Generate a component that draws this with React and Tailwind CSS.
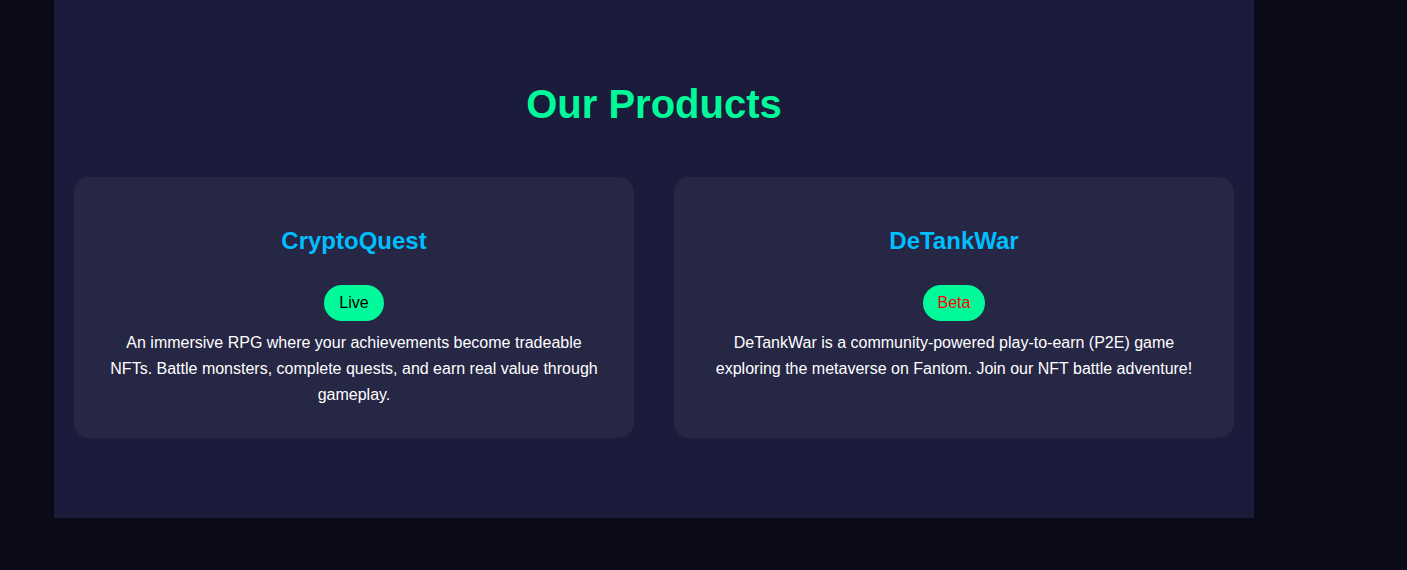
const products = [
  {
    name: 'CryptoQuest',
    status: 'Live',
    statusColor: 'text-black',
    description:
      'An immersive RPG where your achievements become tradeable NFTs. Battle monsters, complete quests, and earn real value through gameplay.',
  },
  {
    name: 'DeTankWar',
    status: 'Beta',
    statusColor: 'text-[#ff0000]',
    description:
      'DeTankWar is a community-powered play-to-earn (P2E) game exploring the metaverse on Fantom. Join our NFT battle adventure!',
  },
];

const App = () => {
  return (
    <div className="min-h-[570px] bg-[#0a0a19] font-['Liberation_Sans',Arial,sans-serif]">
      <section className="ml-[54px] w-[1200px] bg-[#1b1b3b] px-5 pt-20 pb-20">
        <h2 className="text-center text-[40px] leading-[1.2] font-bold text-[#00fa9a] mb-[49px]">Our Products</h2>

        {/* Product cards */}
        <div className="grid grid-cols-2 gap-10">
          {products.map((p) => (
            <div key={p.name} className="bg-[#262645] rounded-[15px] px-8 pt-[50px] pb-[30px] text-center">
              <h3 className="text-2xl leading-[1.2] font-bold text-[#00bfff]">{p.name}</h3>
              <span className={`inline-block mt-[29px] mb-[9px] rounded-full bg-[#00fa9a] px-[15px] py-1.5 text-base leading-6 ${p.statusColor}`}>
                {p.status}
              </span>
              <p className="text-base leading-[26px] text-white">{p.description}</p>
            </div>
          ))}
        </div>
      </section>
    </div>
  );
};

export default App;
